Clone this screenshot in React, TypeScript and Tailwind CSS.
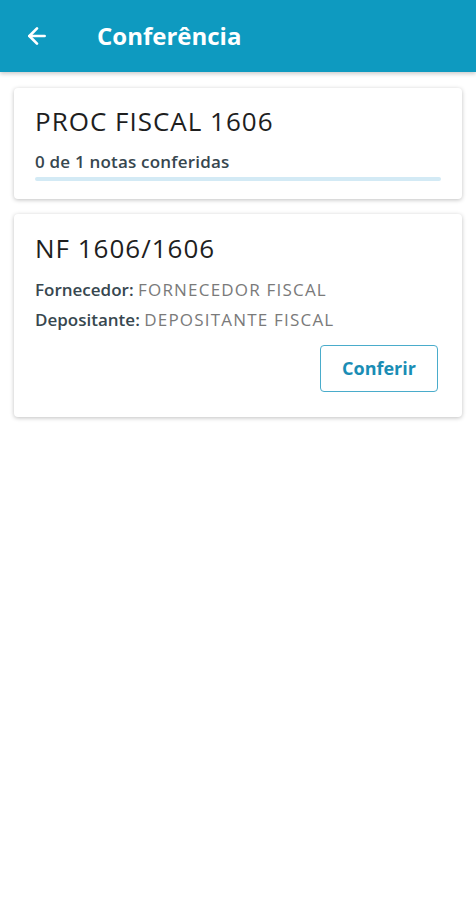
import { ArrowLeft } from "lucide-react";

export default function App() {
  return (
    <div
      className="min-h-[900px] w-full bg-white"
      style={{ fontFamily: "'Open Sans', Lato, sans-serif" }}
    >
      <header className="h-[72px] bg-[#0e9ac0] flex items-center shadow-[0_2px_4px_rgba(0,0,0,0.2)]">
        <div className="w-[72px] flex justify-center pl-[2px]">
          <ArrowLeft className="h-[26px] w-[26px] text-white" strokeWidth={2.5} />
        </div>
        <h1 className="ml-[25px] text-white text-[24px] font-bold leading-none">
          Conferência
        </h1>
      </header>

      <main className="px-[14px] pt-[16px] flex flex-col gap-[15px]">
        <div className="rounded-[4px] bg-white shadow-[0_1px_4px_rgba(0,0,0,0.25)] px-[21px] pt-[18px] pb-[18px]">
          <h2 className="text-[26px] leading-[30px] font-normal text-[#1e1e1e] tracking-[1px]">
            PROC FISCAL 1606
          </h2>
          <p className="mt-[16px] text-[17px] leading-[20px] font-semibold text-[#37474f] tracking-[0.2px]">
            0 de 1 notas conferidas
          </p>
          <div className="mt-[5px] h-[4px] rounded-full bg-[#d3eaf5]" />
        </div>

        <div className="rounded-[4px] bg-white shadow-[0_1px_4px_rgba(0,0,0,0.25)] pl-[21px] pr-[24px] pt-[19px] pb-[25px]">
          <h2 className="text-[26px] leading-[30px] font-normal text-[#1e1e1e] tracking-[1px]">
            NF 1606/1606
          </h2>
          <p className="mt-[17px] text-[17px] leading-[20px]">
            <span className="font-semibold text-[#37474f]">Fornecedor:</span>{" "}
            <span className="text-[#7a7a7a] tracking-[1.2px]">FORNECEDOR FISCAL</span>
          </p>
          <p className="mt-[10px] text-[17px] leading-[20px]">
            <span className="font-semibold text-[#37474f]">Depositante:</span>{" "}
            <span className="text-[#7a7a7a] tracking-[1.2px]">DEPOSITANTE FISCAL</span>
          </p>
          <div className="mt-[15px] flex justify-end">
            <button className="h-[47px] w-[118px] rounded-[4px] border border-[#4aaccb] text-[#1a8db5] text-[18px] font-bold">
              Conferir
            </button>
          </div>
        </div>
      </main>
    </div>
  );
}
